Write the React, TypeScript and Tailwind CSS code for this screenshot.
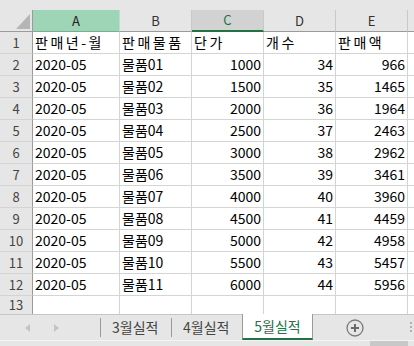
import React from "react";

const rows: [string, string, number, number, number][] = [
  ["2020-05", "물품01", 1000, 34, 966],
  ["2020-05", "물품02", 1500, 35, 1465],
  ["2020-05", "물품03", 2000, 36, 1964],
  ["2020-05", "물품04", 2500, 37, 2463],
  ["2020-05", "물품05", 3000, 38, 2962],
  ["2020-05", "물품06", 3500, 39, 3461],
  ["2020-05", "물품07", 4000, 40, 3960],
  ["2020-05", "물품08", 4500, 41, 4459],
  ["2020-05", "물품09", 5000, 42, 4958],
  ["2020-05", "물품10", 5500, 43, 5457],
  ["2020-05", "물품11", 6000, 44, 5956],
];

const font = { fontFamily: '"Noto Sans CJK KR", "Noto Sans", sans-serif' };

function RowHead({ n, h = "h-[22px]" }: { n: number; h?: string }) {
  return (
    <div className={`w-[33px] ${h} shrink-0 bg-[#e6e6e6] border-r border-r-[#9b9b9b] border-b border-b-[#d4d4d4] flex items-center justify-center text-[13px] text-[#444]`}>
      {n}
    </div>
  );
}

function Cell({ w, children, right, h = "h-[22px]", wide }: { w: string; children?: React.ReactNode; right?: boolean; h?: string; wide?: boolean }) {
  return (
    <div className={`${w} ${h} shrink-0 border-r border-b border-[#d4d4d4] flex items-center ${right ? "justify-end pr-[2px]" : "pl-[2px]"} ${wide ? "tracking-[2.5px]" : ""} text-[14px] text-black overflow-hidden whitespace-nowrap`}>
      {children}
    </div>
  );
}

export default function App() {
  return (
    <div className="w-[414px] h-[346px] overflow-hidden bg-white flex flex-col" style={font}>
      <div className="h-[10px] bg-[#e6e6e6] shrink-0" />
      {/* Column headers */}
      <div className="flex h-[22px] shrink-0">
        <div className="w-[33px] h-[22px] bg-[#e6e6e6] border-r border-r-[#9b9b9b] border-b border-b-[#9b9b9b] relative shrink-0">
          <svg className="absolute left-[16px] top-[4px]" width="14" height="15" viewBox="0 0 14 15">
            <polygon points="14,0 14,15 0,15" fill="#b5b5b5" />
          </svg>
        </div>
        <div className="w-[87px] bg-[#9fd5b7] border-r border-r-[#b9dfc9] border-b border-b-[#9b9b9b] flex items-center justify-center text-[13px] text-[#222] shrink-0">A</div>
        <div className="w-[72px] bg-[#e6e6e6] border-r border-r-[#c8c8c8] border-b border-b-[#9b9b9b] flex items-center justify-center text-[13px] text-[#333] shrink-0">B</div>
        <div className="w-[72px] bg-[#d2d2d2] border-r border-r-[#c8c8c8] border-b-2 border-b-[#217346] flex items-center justify-center text-[13px] text-[#217346] shrink-0">C</div>
        <div className="w-[72px] bg-[#e6e6e6] border-r border-r-[#c8c8c8] border-b border-b-[#9b9b9b] flex items-center justify-center text-[13px] text-[#333] shrink-0">D</div>
        <div className="w-[72px] bg-[#e6e6e6] border-r border-r-[#c8c8c8] border-b border-b-[#9b9b9b] flex items-center justify-center text-[13px] text-[#333] shrink-0">E</div>
        <div className="flex-1 bg-[#e6e6e6] border-b border-b-[#9b9b9b]" />
      </div>
      {/* Row 1 */}
      <div className="flex shrink-0">
        <RowHead n={1} />
        <Cell w="w-[87px]" wide>판매년-월</Cell>
        <Cell w="w-[72px]" wide>판매물품</Cell>
        <Cell w="w-[72px]" wide>단가</Cell>
        <Cell w="w-[72px]" wide>개수</Cell>
        <Cell w="w-[72px]" wide>판매액</Cell>
        <div className="flex-1 h-[22px] border-b border-[#d4d4d4]" />
      </div>
      {rows.map((r, i) => (
        <div className="flex shrink-0" key={i}>
          <RowHead n={i + 2} />
          <Cell w="w-[87px]">{r[0]}</Cell>
          <Cell w="w-[72px]">{r[1]}</Cell>
          <Cell w="w-[72px]" right>{r[2]}</Cell>
          <Cell w="w-[72px]" right>{r[3]}</Cell>
          <Cell w="w-[72px]" right>{r[4]}</Cell>
          <div className="flex-1 h-[22px] border-b border-[#d4d4d4]" />
        </div>
      ))}
      <div className="flex shrink-0 h-[18px]">
        <div className="w-[33px] h-[18px] shrink-0 bg-[#e6e6e6] border-r border-r-[#9b9b9b] flex items-center justify-center text-[13px] text-[#444]">13</div>
        <div className="w-[87px] h-[18px] border-r border-[#d4d4d4] shrink-0" />
        <div className="w-[72px] h-[18px] border-r border-[#d4d4d4] shrink-0" />
        <div className="w-[72px] h-[18px] border-r border-[#d4d4d4] shrink-0" />
        <div className="w-[72px] h-[18px] border-r border-[#d4d4d4] shrink-0" />
        <div className="w-[72px] h-[18px] border-r border-[#d4d4d4] shrink-0" />
        <div className="flex-1" />
      </div>
      {/* Tab bar */}
      <div className="relative h-[26px] shrink-0 bg-[#e6e6e6] border-t border-[#c6c6c6] flex items-stretch text-[14px]">
        <div className="w-[100px] shrink-0 flex items-center">
          <svg className="ml-[25px]" width="5" height="8" viewBox="0 0 5 8"><polygon points="5,0 5,8 0,4" fill="#c4c4c4" /></svg>
          <svg className="ml-[24px]" width="5" height="8" viewBox="0 0 5 8"><polygon points="0,0 0,8 5,4" fill="#c4c4c4" /></svg>
        </div>
        <div className="w-px my-[3px] bg-[#9a9a9a] shrink-0" />
        <div className="w-[70px] shrink-0 flex items-center pl-[11px] text-[#444]">3월실적</div>
        <div className="w-px my-[3px] bg-[#9a9a9a] shrink-0" />
        <div className="w-[70px] shrink-0 flex items-center pl-[11px] text-[#444]">4월실적</div>
        <div className="w-[71px] shrink-0 -mt-px bg-white border-x border-[#9a9a9a] border-b-2 border-b-[#217346] flex items-center justify-center text-[#217346]">5월실적</div>
        <div className="flex-1 flex items-center pl-[33px]">
          <svg width="18" height="18" viewBox="0 0 18 18">
            <circle cx="9" cy="9" r="8" fill="none" stroke="#7a7a7a" strokeWidth="1.3" />
            <path d="M9 5v8M5 9h8" stroke="#6a6a6a" strokeWidth="2" />
          </svg>
        </div>
        <div className="absolute right-[2px] top-[7px] flex flex-col gap-[2px]">
          <div className="w-[2px] h-[2px] bg-[#b0b0b0]" />
          <div className="w-[2px] h-[2px] bg-[#b0b0b0]" />
          <div className="w-[2px] h-[2px] bg-[#b0b0b0]" />
        </div>
      </div>
      <div className="h-px bg-[#f4f4f4] shrink-0" />
      <div className="flex-1 bg-[#e6e6e6] flex">
        <div className="flex-1" />
        <div className="w-[38px] bg-[#c8c8c8] mr-[6px]" />
      </div>
    </div>
  );
}
